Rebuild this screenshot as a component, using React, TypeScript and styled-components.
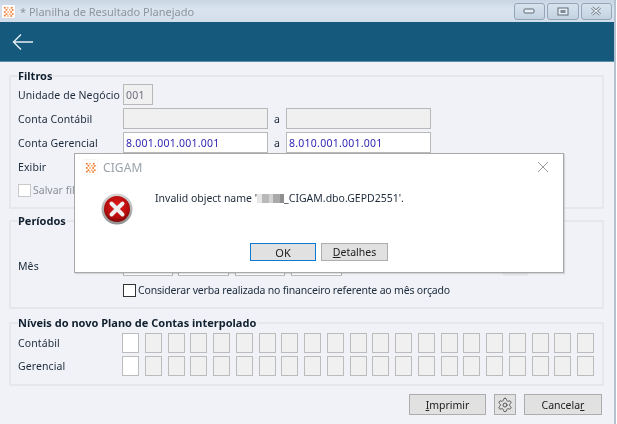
import React from "react";
import styled, { createGlobalStyle } from "styled-components";

const Global = createGlobalStyle`
  html, body { margin: 0; padding: 0; width: 617px; height: 424px; overflow: hidden; background: #ffffff; }
  * { box-sizing: border-box; }
  body { font-family: "Noto Sans", "Liberation Sans", sans-serif; font-size: 10.5px; color: #1b2a3a; }
`;

const Window = styled.div`
  position: relative;
  width: 616px;
  height: 424px;
  display: flex;
  flex-direction: column;
  background: #f1f2f8;
  border-right: 2px solid #b4c2d0;
  filter: blur(0.3px);
`;

const TitleBar = styled.div`
  height: 22px;
  display: flex;
  align-items: center;
  padding: 0 2px 0 2px;
  gap: 5px;
  background: linear-gradient(#c9d5e2, #d9e4ef 40%, #d2deea);
`;

const TitleText = styled.span`
  flex: 1;
  font-size: 11px;
  color: #8d959e;
`;

const LogoTile = styled.div<{ $size: number }>`
  width: ${(p) => p.$size}px;
  height: ${(p) => p.$size}px;
  display: flex;
  align-items: center;
  justify-content: center;
  background: #fff;
  box-shadow: 0 0 1px #c8c8c8;
`;

const WinButtons = styled.div`
  display: flex;
  gap: 2px;
`;

const WinButton = styled.div`
  width: 31.5px;
  height: 17px;
  display: flex;
  align-items: center;
  justify-content: center;
  border: 1px solid #93a5b8;
  border-radius: 3px;
  background: linear-gradient(#d8e3ee, #c4d2e0);
`;

const Header = styled.div`
  height: 40px;
  display: flex;
  align-items: center;
  padding-left: 12px;
  background: #155a7c;
  border-bottom: 1px solid #5d8ea8;
`;

const Content = styled.div`
  flex: 1;
  display: flex;
  flex-direction: column;
  padding: 8px 10px 0 9px;
`;

const Group = styled.fieldset<{ $h: number; $mt?: number }>`
  margin: ${(p) => p.$mt ?? 0}px 0 0;
  padding: 0 0 0 7px;
  height: ${(p) => p.$h}px;
  border: 2px solid #e6e7ed;
  border-radius: 1px;
  min-width: 0;
  display: flex;
  flex-direction: column;
`;

const Legend = styled.legend`
  padding: 0 1px 0 0;
  margin: 0;
  font-weight: 700;
  font-size: 11px;
  line-height: 12px;
  color: #10202e;
`;

const Row = styled.div<{ $h: number; $mt?: number; $indent?: number }>`
  height: ${(p) => p.$h}px;
  margin-top: ${(p) => p.$mt ?? 0}px;
  padding-left: ${(p) => p.$indent ?? 0}px;
  display: flex;
  align-items: center;
`;

const Label = styled.div`
  width: 105px;
  flex: none;
  letter-spacing: 0.1px;
`;

const Field = styled.div<{ $w: number; $white?: boolean }>`
  width: ${(p) => p.$w}px;
  height: 100%;
  flex: none;
  display: flex;
  align-items: center;
  padding-left: 2px;
  letter-spacing: 0.25px;
  border: 1px solid #b9b9b9;
  background: ${(p) => (p.$white ? "#ffffff" : "#f0f0f0")};
  color: ${(p) => (p.$white ? "#2a1fb0" : "#6d6d80")};
`;

const Sep = styled.div`
  width: 18px;
  flex: none;
  text-align: center;
`;

const Check = styled.div<{ $dark?: boolean }>`
  width: 13px;
  height: 13px;
  flex: none;
  margin-right: 2px;
  background: #fff;
  border: 1px solid ${(p) => (p.$dark ? "#333" : "#c9c9c9")};
`;

const Muted = styled.span`
  color: #8a8f96;
`;

const CheckText = styled.span`
  letter-spacing: -0.18px;
`;

const MonthField = styled.div<{ $w: number; $ml: number }>`
  width: ${(p) => p.$w}px;
  height: 100%;
  margin-left: ${(p) => p.$ml}px;
  flex: none;
  background: #fff;
  border: 1px solid #b9b9b9;
`;

const GrayStub = styled.div`
  width: 25px;
  height: 100%;
  margin-left: 161px;
  background: #e8e8ec;
`;

const Boxes = styled.div`
  display: grid;
  grid-template-columns: repeat(21, 17px);
  column-gap: 5.75px;
  height: 100%;
  margin-left: -1px;
`;

const LevelBox = styled.div<{ $active?: boolean }>`
  border: 1px solid #bcbcbc;
  background: ${(p) => (p.$active ? "#ffffff" : "#f0f0f0")};
`;

const Footer = styled.div`
  display: flex;
  justify-content: flex-end;
  margin-top: 8px;
  padding-right: 2px;
  gap: 8px;
`;

const Btn = styled.div<{ $w: number }>`
  width: ${(p) => p.$w}px;
  height: 21px;
  display: flex;
  align-items: center;
  justify-content: center;
  border: 1px solid #adadad;
  background: #e1e1e1;
  color: #202020;
`;

const Dialog = styled.div`
  position: absolute;
  left: 74px;
  top: 153px;
  width: 490px;
  height: 120px;
  display: flex;
  flex-direction: column;
  background: #ffffff;
  border: 1px solid #a9a9a9;
  box-shadow: 1px 1px 1px rgba(0, 0, 0, 0.12);
`;

const DialogTitle = styled.div`
  height: 26px;
  display: flex;
  align-items: center;
  padding: 0 14px 0 8px;
  gap: 6px;
  font-size: 12px;
  letter-spacing: 0.1px;
  color: #9aa3ab;
`;

const Grow = styled.div`
  flex: 1;
`;

const DialogBody = styled.div`
  display: flex;
  align-items: flex-start;
  height: 63px;
  padding: 13px 0 0 26px;
`;

const Message = styled.div`
  margin: -2px 0 0 22px;
  color: #1d2a3a;
  display: flex;
  align-items: center;
`;

const Redacted = styled.span`
  display: inline-block;
  width: 27px;
  height: 9px;
  background: linear-gradient(90deg, #e6e6e6 0 20%, #b9b9b9 20% 45%, #d3d3d3 45% 60%, #a9a9a9 60% 85%, #8f8f8f 85%);
`;

const DialogActions = styled.div`
  display: flex;
  padding-left: 175px;
  gap: 5px;
`;

const DialogBtn = styled.div<{ $primary?: boolean }>`
  width: ${(p) => (p.$primary ? 66 : 67)}px;
  height: 18px;
  display: flex;
  align-items: center;
  justify-content: center;
  background: #e1e1e1;
  border: 1px solid ${(p) => (p.$primary ? "#0f78d0" : "#adadad")};
  color: #202020;
  font-size: ${(p) => (p.$primary ? 11 : 10.5)}px;
`;

const Logo = ({ size }: { size: number }) => (
  <svg width={size} height={size} viewBox="0 0 12 12">
    {[
      [1, 1], [4.2, 1], [8.6, 1], [2.8, 3.2], [6.5, 3.2], [9.6, 3.4],
      [1, 5.6], [4.6, 5.6], [8, 5.6], [2.8, 8], [6.4, 8], [9.6, 8], [1, 9.6], [4.4, 10], [8, 10],
    ].map(([x, y], i) => (
      <rect key={i} x={x} y={y} width="1.9" height="1.8" fill={i % 3 === 1 ? "#f7b27a" : "#ef7a2e"} />
    ))}
  </svg>
);

const ErrorIcon = () => (
  <svg width="32" height="32" viewBox="0 0 32 32">
    <defs>
      <radialGradient id="red" cx="50%" cy="40%" r="60%">
        <stop offset="0%" stopColor="#e21c1c" />
        <stop offset="70%" stopColor="#b80d0d" />
        <stop offset="100%" stopColor="#7e0a0a" />
      </radialGradient>
      <linearGradient id="ring" x1="0" y1="0" x2="0" y2="1">
        <stop offset="0%" stopColor="#d8d8d8" />
        <stop offset="100%" stopColor="#8f8f8f" />
      </linearGradient>
    </defs>
    <circle cx="16" cy="16" r="15.5" fill="url(#ring)" />
    <circle cx="16" cy="16" r="13" fill="url(#red)" />
    <path d="M10.5 10.5 L21.5 21.5 M21.5 10.5 L10.5 21.5" stroke="#f0f0f0" strokeWidth="4" strokeLinecap="round" />
  </svg>
);

const GearIcon = () => (
  <svg width="16" height="16" viewBox="0 0 24 24" fill="none" stroke="#555" strokeWidth="1.5" strokeLinecap="round" strokeLinejoin="round">
    <path d="M12.22 2h-.44a2 2 0 0 0-2 2v.18a2 2 0 0 1-1 1.73l-.43.25a2 2 0 0 1-2 0l-.15-.08a2 2 0 0 0-2.73.73l-.22.38a2 2 0 0 0 .73 2.73l.15.1a2 2 0 0 1 1 1.72v.51a2 2 0 0 1-1 1.74l-.15.09a2 2 0 0 0-.73 2.73l.22.38a2 2 0 0 0 2.73.73l.15-.08a2 2 0 0 1 2 0l.43.25a2 2 0 0 1 1 1.73V20a2 2 0 0 0 2 2h.44a2 2 0 0 0 2-2v-.18a2 2 0 0 1 1-1.73l.43-.25a2 2 0 0 1 2 0l.15.08a2 2 0 0 0 2.73-.73l.22-.39a2 2 0 0 0-.73-2.73l-.15-.08a2 2 0 0 1-1-1.74v-.5a2 2 0 0 1 1-1.74l.15-.09a2 2 0 0 0 .73-2.73l-.22-.38a2 2 0 0 0-2.73-.73l-.15.08a2 2 0 0 1-2 0l-.43-.25a2 2 0 0 1-1-1.73V4a2 2 0 0 0-2-2z" />
    <circle cx="12" cy="12" r="3" />
  </svg>
);

const levels = Array.from({ length: 21 }, (_, i) => i);

export default function App() {
  return (
    <>
      <Global />
      <Window>
        <TitleBar>
          <LogoTile $size={13}><Logo size={11} /></LogoTile>
          <TitleText>* Planilha de Resultado Planejado</TitleText>
          <WinButtons>
            <WinButton>
              <svg width="12" height="6" viewBox="0 0 12 6"><rect x="1" y="1" width="10" height="4" rx="1" fill="#e8eef4" stroke="#5d6c7b" /></svg>
            </WinButton>
            <WinButton>
              <svg width="12" height="9" viewBox="0 0 12 9"><rect x="1" y="1" width="10" height="7" fill="#e8eef4" stroke="#5d6c7b" /><rect x="3.5" y="3" width="5" height="3" fill="#7d8a97" /></svg>
            </WinButton>
            <WinButton>
              <svg width="12" height="10" viewBox="0 0 12 10"><path d="M2 1.5 L10 8.5 M10 1.5 L2 8.5" stroke="#5d6c7b" strokeWidth="2.6" /><path d="M2 1.5 L10 8.5 M10 1.5 L2 8.5" stroke="#eef2f6" strokeWidth="1.2" /></svg>
            </WinButton>
          </WinButtons>
        </TitleBar>
        <Header>
          <svg width="21" height="18" viewBox="0 0 21 18" fill="none" stroke="#e6eef3" strokeWidth="1.4">
            <path d="M21 9 H1.5 M9 1.5 L1.5 9 L9 16.5" />
          </svg>
        </Header>
        <Content>
          <Group $h={139}>
            <Legend>Filtros</Legend>
            <Row $h={21} $mt={2}>
              <Label>Unidade de Negócio</Label>
              <Field $w={30}>001</Field>
            </Row>
            <Row $h={21} $mt={3}>
              <Label>Conta Contábil</Label>
              <Field $w={145} />
              <Sep>a</Sep>
              <Field $w={145} />
            </Row>
            <Row $h={21} $mt={3}>
              <Label>Conta Gerencial</Label>
              <Field $w={145} $white>8.001.001.001.001</Field>
              <Sep>a</Sep>
              <Field $w={145} $white>8.010.001.001.001</Field>
            </Row>
            <Row $h={21} $mt={3}>
              <Label>Exibir</Label>
            </Row>
            <Row $h={14} $mt={6}>
              <Check />
              <Muted>Salvar filtros</Muted>
            </Row>
          </Group>
          <Group $h={94} $mt={6}>
            <Legend>Períodos</Legend>
            <Row $h={21} $mt={28}>
              <Label>Mês</Label>
              <MonthField $w={50} $ml={0} />
              <MonthField $w={51} $ml={5} />
              <MonthField $w={50} $ml={6} />
              <MonthField $w={51} $ml={6} />
              <GrayStub />
            </Row>
            <Row $h={14} $mt={7} $indent={105}>
              <Check $dark />
              <CheckText>Considerar verba realizada no financeiro referente ao mês orçado</CheckText>
            </Row>
          </Group>
          <Group $h={69} $mt={8}>
            <Legend>Níveis do novo Plano de Contas interpolado</Legend>
            <Row $h={20} $mt={4}>
              <Label>Contábil</Label>
              <Boxes>{levels.map((i) => <LevelBox key={i} $active={i === 0} />)}</Boxes>
            </Row>
            <Row $h={20} $mt={3}>
              <Label>Gerencial</Label>
              <Boxes>{levels.map((i) => <LevelBox key={i} $active={i === 0} />)}</Boxes>
            </Row>
          </Group>
          <Footer>
            <Btn $w={77}><span><u>I</u>mprimir</span></Btn>
            <Btn $w={22}><GearIcon /></Btn>
            <Btn $w={78}><span>Cancela<u>r</u></span></Btn>
          </Footer>
        </Content>
        <Dialog>
          <DialogTitle>
            <LogoTile $size={14}><Logo size={11} /></LogoTile>
            <span>CIGAM</span>
            <Grow />
            <svg width="12" height="12" viewBox="0 0 12 12" stroke="#9a9a9a" strokeWidth="1"><path d="M1 1 L11 11 M11 1 L1 11" /></svg>
          </DialogTitle>
          <DialogBody>
            <ErrorIcon />
            <Message>Invalid object name '<Redacted />_CIGAM.dbo.GEPD2551'.</Message>
          </DialogBody>
          <DialogActions>
            <DialogBtn $primary>OK</DialogBtn>
            <DialogBtn><span><u>D</u>etalhes</span></DialogBtn>
          </DialogActions>
        </Dialog>
      </Window>
    </>
  );
}
